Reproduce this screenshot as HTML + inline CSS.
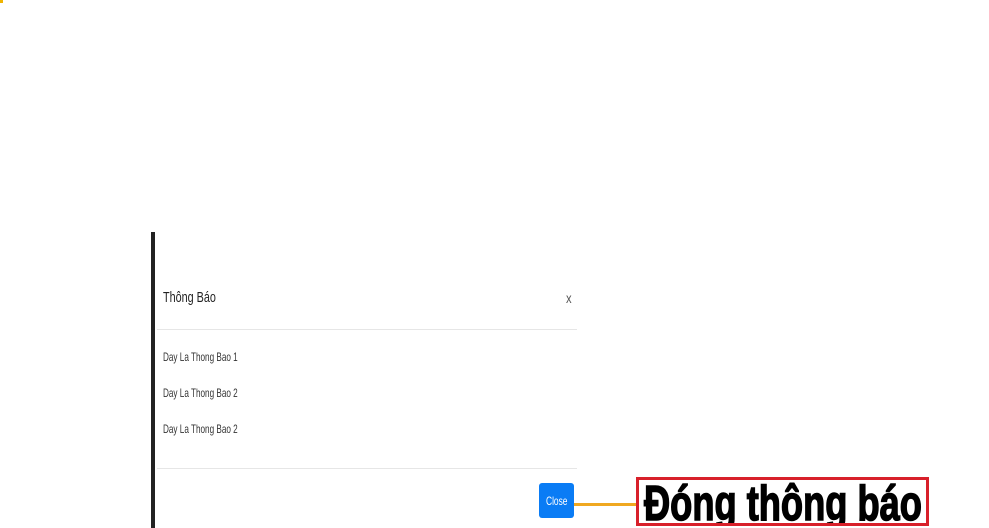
<!DOCTYPE html>
<html><head><meta charset="utf-8"><style>
html,body{margin:0;padding:0;width:989px;height:528px;overflow:hidden;background:#fff;font-family:"Liberation Sans",sans-serif;color:#333}
.a{position:absolute;white-space:nowrap;transform-origin:0 0}
</style></head><body>
<div class="a" style="left:0;top:0;width:3px;height:3px;background:#f0b400"></div>
<div class="a" style="left:151px;top:232px;width:4px;height:296px;background:#222"></div>
<div class="a" style="left:163px;top:289px;font-size:15px;color:#222;transform:scaleX(0.72)">Thông Báo</div>
<div class="a" style="left:566px;top:290px;font-size:14px;color:#555;transform:scaleX(0.8)">x</div>
<div class="a" style="left:157px;top:329px;width:420px;height:1px;background:#e6e6e6"></div>
<div class="a" style="left:163px;top:350px;font-size:12px;transform:scaleX(0.68)">Day La Thong Bao 1</div>
<div class="a" style="left:163px;top:386px;font-size:12px;transform:scaleX(0.68)">Day La Thong Bao 2</div>
<div class="a" style="left:163px;top:422px;font-size:12px;transform:scaleX(0.68)">Day La Thong Bao 2</div>
<div class="a" style="left:157px;top:468px;width:420px;height:1px;background:#e6e6e6"></div>
<div class="a" style="left:539px;top:483px;width:35px;height:35px;background:#0a7cf5;border-radius:3px"></div>
<div class="a" style="left:546px;top:494px;font-size:12px;color:#fff;transform:scaleX(0.7)">Close</div>
<div class="a" style="left:574px;top:503px;width:64px;height:3px;background:#f0a820"></div>
<div class="a" style="left:636px;top:477px;width:287px;height:43px;border:3px solid #d8202a;overflow:hidden">
<div style="position:absolute;left:5px;top:-4px;font-weight:bold;font-size:49px;color:#000;line-height:56px;white-space:nowrap;transform:scaleX(0.74);transform-origin:0 0;-webkit-text-stroke:1.5px #000">Đóng thông báo</div></div>
</body></html>
